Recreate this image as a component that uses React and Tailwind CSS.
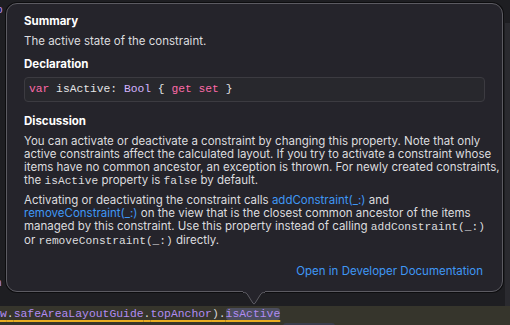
import React from 'react';

const Mono = ({ children }) => (
  <span className="font-['Liberation_Mono',monospace] text-[11.2px]">{children}</span>
);

const Link = ({ children }) => <span className="text-[#3f97f5]">{children}</span>;

const QuickHelp = () => (
  <div className="relative ml-[6px] mt-[3px] h-[289px] w-[497px] shrink-0 rounded-[11px] border border-[#5c5b62] bg-[#25242b] px-[17px] pt-[10px] text-[11.5px] text-[#dcdcdf] shadow-[0_0_0_1px_rgba(0,0,0,0.55)]">
    <div className="font-bold leading-[14px] text-white">Summary</div>
    <div className="mt-[6px] leading-[14px]">The active state of the constraint.</div>

    <div className="mt-[9px] font-bold leading-[14px] text-white">Declaration</div>
    <div className="mt-[6px] flex h-[25px] items-center rounded-[4px] border border-[#3c3b41] bg-[#28282d] px-[4px] font-['Liberation_Mono',monospace] text-[11.3px] text-[#e4e4e6]">
      <span className="text-[#fc6aa8]">var</span>
      <span className="whitespace-pre"> isActive: </span>
      <span className="text-[#d4b3ff]">Bool</span>
      <span className="whitespace-pre"> {'{'} </span>
      <span className="text-[#fc6aa8]">get set</span>
      <span className="whitespace-pre"> {'}'}</span>
    </div>

    <div className="mt-[12px] font-bold leading-[14px] text-white">Discussion</div>
    <p className="mt-[7px] whitespace-nowrap leading-[13px]">
      You can activate or deactivate a constraint by changing this property. Note that only
      <br />
      active constraints affect the calculated layout. If you try to activate a constraint whose
      <br />
      items have no common ancestor, an exception is thrown. For newly created constraints,
      <br />
      the <Mono>isActive</Mono> property is <Mono>false</Mono> by default.
    </p>
    <p className="mt-[6px] whitespace-nowrap leading-[13px]">
      Activating or deactivating the constraint calls <Link>addConstraint(_:)</Link> and
      <br />
      <Link>removeConstraint(_:)</Link> on the view that is the closest common ancestor of the items
      <br />
      managed by this constraint. Use this property instead of calling <Mono>addConstraint(_:)</Mono>
      <br />
      or <Mono>removeConstraint(_:)</Mono> directly.
    </p>

    <div className="mt-[16px] flex justify-end pr-[2px] leading-[14px]">
      <span className="text-[#3f97f5]">Open in Developer Documentation</span>
    </div>

    {/* arrow pointing at the symbol */}
    <svg className="absolute left-[236px] top-[287px]" width="22" height="16" viewBox="0 0 22 16">
      <path d="M0 1.5 L1.5 1.5 Q3 1.5 4.2 3 L10 12.3 Q11 13.6 12 12.3 L17.8 3 Q19 1.5 20.5 1.5 L22 1.5 L22 0 L0 0 Z" fill="#25242b" />
      <path d="M0 1.5 L1.5 1.5 Q3 1.5 4.2 3 L10 12.3 Q11 13.6 12 12.3 L17.8 3 Q19 1.5 20.5 1.5 L22 1.5" fill="none" stroke="#5c5b62" strokeWidth="1" />
    </svg>
  </div>
);

const CodeLine = () => (
  <div className="relative mt-auto h-[19px] bg-[#36352c] font-['Liberation_Mono',monospace] text-[11.4px] leading-[17px]">
    <span className="whitespace-pre underline decoration-[#e9ad22] decoration-2 underline-offset-[3px]">
      <span className="text-[#b18cf2]">w</span>
      <span className="text-[#d8d8da]">.</span>
      <span className="text-[#b18cf2]">safeAreaLayoutGuide</span>
      <span className="text-[#d8d8da]">.</span>
      <span className="text-[#b18cf2]">topAnchor</span>
      <span className="text-[#d8d8da]">).</span>
      <span className="rounded-[3px] bg-[#4c4e5e] text-[#b18cf2]">isActive</span>
    </span>
    <div className="absolute left-[283px] top-[17px] h-[4px] w-[52px] rounded-t-[3px] bg-[#3a3d4c]" />
  </div>
);

export default function App() {
  return (
    <div className="relative h-[325px] w-[510px] overflow-hidden bg-[#1e1e22] font-['Inter',sans-serif]">
      {/* editor scrollbar edge and clipped code behind the popover */}
      <div className="absolute right-0 top-[23px] h-[283px] w-[5px] bg-[#2a2a2f]" />
      <span className="absolute left-[-4px] top-[2px] font-['Liberation_Mono',monospace] text-[11.4px] text-[#b18cf2]">p</span>
      <span className="absolute left-[-5px] top-[275px] font-['Liberation_Mono',monospace] text-[11.4px] text-[#b18cf2]">n</span>
      <div className="relative flex h-full flex-col">
        <QuickHelp />
        <CodeLine />
      </div>
    </div>
  );
}
